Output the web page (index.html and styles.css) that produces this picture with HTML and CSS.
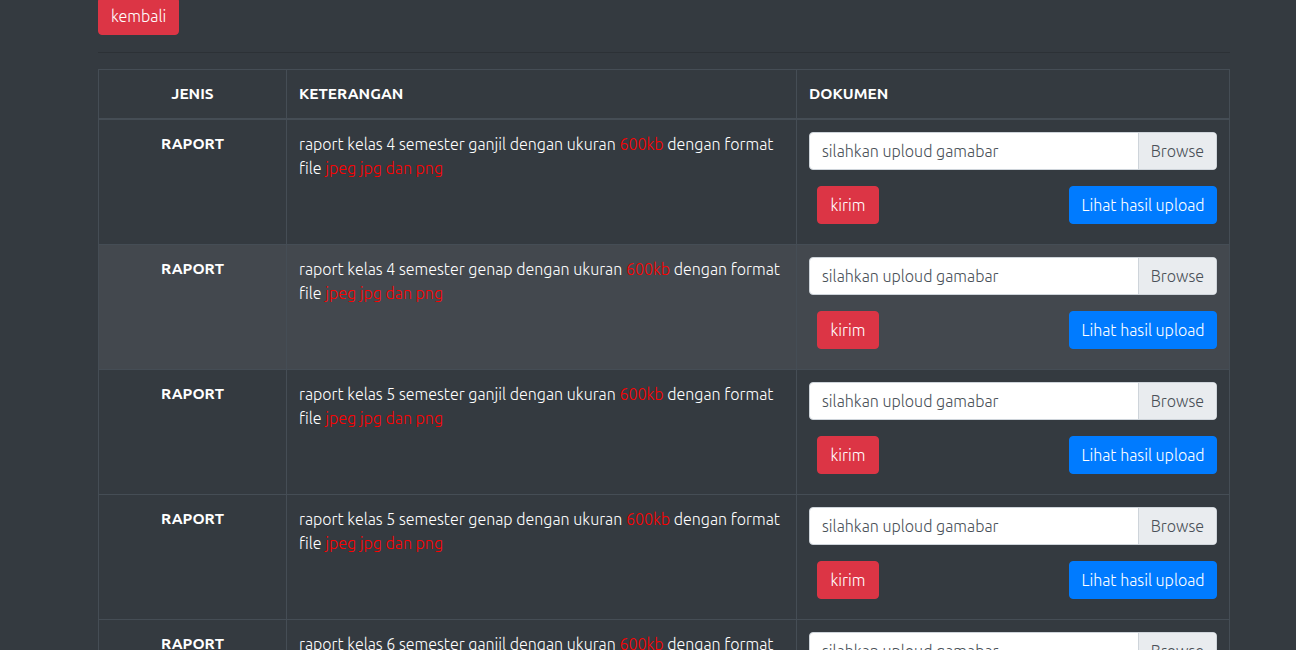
FILE: index.html
```html
<!DOCTYPE html>
<html>
<head>
<meta charset="utf-8">
<link rel="stylesheet" href="styles.css">
</head>
<body>
<div class="page">
  <div class="top"><button class="btn btn-red back">kembali</button></div>
  <hr class="rule">
  <table class="tbl">
    <thead>
      <tr><th class="c-jenis">JENIS</th><th class="c-ket">KETERANGAN</th><th class="c-dok">DOKUMEN</th></tr>
    </thead>
    <tbody>
      <tr>
        <td class="jenis">RAPORT</td>
        <td class="ket">raport kelas 4 semester ganjil dengan ukuran <span class="red">600kb</span> dengan format file <span class="red">jpeg jpg dan png</span></td>
        <td class="dok"><div class="file"><span class="fname">silahkan uploud gamabar</span><span class="browse">Browse</span></div><div class="acts"><button class="btn btn-red">kirim</button><button class="btn btn-blue">Lihat hasil upload</button></div></td>
      </tr>
      <tr class="hl">
        <td class="jenis">RAPORT</td>
        <td class="ket">raport kelas 4 semester genap dengan ukuran <span class="red">600kb</span> dengan format file <span class="red">jpeg jpg dan png</span></td>
        <td class="dok"><div class="file"><span class="fname">silahkan uploud gamabar</span><span class="browse">Browse</span></div><div class="acts"><button class="btn btn-red">kirim</button><button class="btn btn-blue">Lihat hasil upload</button></div></td>
      </tr>
      <tr>
        <td class="jenis">RAPORT</td>
        <td class="ket">raport kelas 5 semester ganjil dengan ukuran <span class="red">600kb</span> dengan format file <span class="red">jpeg jpg dan png</span></td>
        <td class="dok"><div class="file"><span class="fname">silahkan uploud gamabar</span><span class="browse">Browse</span></div><div class="acts"><button class="btn btn-red">kirim</button><button class="btn btn-blue">Lihat hasil upload</button></div></td>
      </tr>
      <tr>
        <td class="jenis">RAPORT</td>
        <td class="ket">raport kelas 5 semester genap dengan ukuran <span class="red">600kb</span> dengan format file <span class="red">jpeg jpg dan png</span></td>
        <td class="dok"><div class="file"><span class="fname">silahkan uploud gamabar</span><span class="browse">Browse</span></div><div class="acts"><button class="btn btn-red">kirim</button><button class="btn btn-blue">Lihat hasil upload</button></div></td>
      </tr>
      <tr>
        <td class="jenis">RAPORT</td>
        <td class="ket">raport kelas 6 semester ganjil dengan ukuran <span class="red">600kb</span> dengan format file <span class="red">jpeg jpg dan png</span></td>
        <td class="dok"><div class="file"><span class="fname">silahkan uploud gamabar</span><span class="browse">Browse</span></div><div class="acts"><button class="btn btn-red">kirim</button><button class="btn btn-blue">Lihat hasil upload</button></div></td>
      </tr>
    </tbody>
  </table>
</div>
</body>
</html>
```

FILE: styles.css
```css
html, body {
  margin: 0;
  padding: 0;
  background: #343a40;
  font-family: Ubuntu, "Open Sans", "Noto Sans", sans-serif;
  font-size: 16px;
  font-weight: 300;
  color: #fff;
  overflow: hidden;
}
.page {
  width: 1132px;
  margin-left: 98px;
  margin-top: -3px;
}
.top { height: 38px; }
.btn {
  font-family: inherit;
  font-size: 16px;
  font-weight: 300;
  height: 38px;
  border: 1px solid transparent;
  border-radius: 4px;
  padding: 0 12px;
  color: #fff;
  cursor: pointer;
  line-height: 36px;
}
.btn-red { background: #dc3545; border-color: #dc3545; }
.btn-blue { background: #007bff; border-color: #007bff; }
.back { width: 81px; }
.rule {
  margin: 17px 0 16px 0;
  border: 0;
  border-top: 1px solid rgba(0,0,0,0.15);
  height: 0;
}
.tbl {
  width: 1132px;
  border-collapse: collapse;
  table-layout: fixed;
}
.tbl th, .tbl td {
  border: 1px solid #454d55;
  padding: 12px;
  vertical-align: top;
  text-align: left;
}
.tbl th {
  font-weight: bold;
  font-size: 15.5px;
  height: 24px;
  line-height: 24px;
  border-bottom-width: 2px;
  vertical-align: middle;
}
.c-jenis { width: 163px; text-align: center !important; }
.c-ket { width: 485px; }
.tbl td { height: 100px; line-height: 24px; }
.jenis { text-align: center !important; font-weight: bold; font-size: 15.5px; }
.hl td { background: rgba(255,255,255,0.075); }
.red { color: #ff0000; }
.file {
  display: flex;
  height: 38px;
  box-sizing: border-box;
  border: 1px solid #ced4da;
  border-radius: 4px;
  background: #fff;
  overflow: hidden;
}
.fname {
  flex: 1;
  color: #495057;
  padding: 0 12px;
  line-height: 36px;
}
.browse {
  background: #e9ecef;
  color: #495057;
  border-left: 1px solid #ced4da;
  padding: 0 12px;
  line-height: 36px;
}
.acts {
  display: flex;
  justify-content: space-between;
  margin-top: 16px;
  padding-left: 8px;
}
.acts .btn-red { width: 62px; padding: 0; }
.acts .btn-blue { width: 148px; padding: 0; }
```
